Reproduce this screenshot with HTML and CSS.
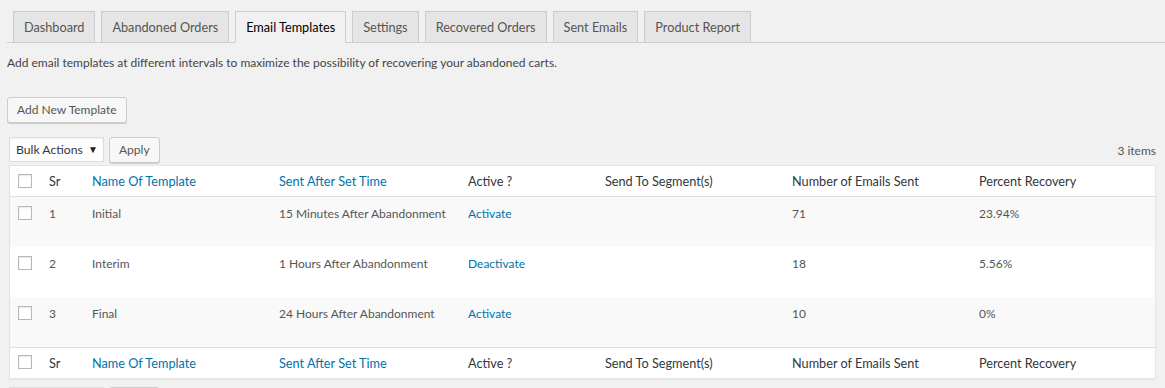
FILE: index.html
```html
<!DOCTYPE html>
<html lang="en">
<head>
    <meta charset="UTF-8">
    <meta name="viewport" content="width=device-width, initial-scale=1.0">
    <title>Email Templates</title>
    <link rel="stylesheet" href="styles.css">
</head>
<body>
    <h2 class="nav-tab-wrapper">
        <a class="nav-tab" href="#">Dashboard</a>
        <a class="nav-tab" href="#">Abandoned Orders</a>
        <a class="nav-tab nav-tab-active" href="#">Email Templates</a>
        <a class="nav-tab" href="#">Settings</a>
        <a class="nav-tab" href="#">Recovered Orders</a>
        <a class="nav-tab" href="#">Sent Emails</a>
        <a class="nav-tab" href="#">Product Report</a>
    </h2>

    <p class="intro">Add email templates at different intervals to maximize the possibility of recovering your abandoned carts.</p>

    <div class="add-row">
        <a class="button" href="#">Add New Template</a>
    </div>

    <div class="list">
        <div class="tablenav">
            <div class="bulk">
                <div class="select"><span>Bulk Actions</span><span class="arrow">▼</span></div>
                <a class="button" href="#">Apply</a>
            </div>
            <span class="count">3 items</span>
        </div>

        <table class="widefat">
            <colgroup>
                <col class="col-cb">
                <col class="col-sr">
                <col class="col-name">
                <col class="col-sent">
                <col class="col-active">
                <col class="col-segment">
                <col class="col-count">
                <col>
            </colgroup>
            <thead>
                <tr>
                    <th class="check-column"><input type="checkbox"></th>
                    <th>Sr</th>
                    <th><a href="#">Name Of Template</a></th>
                    <th><a href="#">Sent After Set Time</a></th>
                    <th>Active ?</th>
                    <th>Send To Segment(s)</th>
                    <th>Number of Emails Sent</th>
                    <th>Percent Recovery</th>
                </tr>
            </thead>
            <tbody>
                <tr>
                    <td class="check-column"><input type="checkbox"></td>
                    <td>1</td>
                    <td>Initial</td>
                    <td>15 Minutes After Abandonment</td>
                    <td><a href="#">Activate</a></td>
                    <td></td>
                    <td>71</td>
                    <td>23.94%</td>
                </tr>
                <tr>
                    <td class="check-column"><input type="checkbox"></td>
                    <td>2</td>
                    <td>Interim</td>
                    <td>1 Hours After Abandonment</td>
                    <td><a href="#">Deactivate</a></td>
                    <td></td>
                    <td>18</td>
                    <td>5.56%</td>
                </tr>
                <tr>
                    <td class="check-column"><input type="checkbox"></td>
                    <td>3</td>
                    <td>Final</td>
                    <td>24 Hours After Abandonment</td>
                    <td><a href="#">Activate</a></td>
                    <td></td>
                    <td>10</td>
                    <td>0%</td>
                </tr>
            </tbody>
            <tfoot>
                <tr>
                    <th class="check-column"><input type="checkbox"></th>
                    <th>Sr</th>
                    <th><a href="#">Name Of Template</a></th>
                    <th><a href="#">Sent After Set Time</a></th>
                    <th>Active ?</th>
                    <th>Send To Segment(s)</th>
                    <th>Number of Emails Sent</th>
                    <th>Percent Recovery</th>
                </tr>
            </tfoot>
        </table>

        <div class="tablenav bottom">
            <div class="bulk">
                <div class="select"><span>Bulk Actions</span><span class="arrow">▼</span></div>
                <a class="button" href="#">Apply</a>
            </div>
        </div>
    </div>
</body>
</html>
```

FILE: styles.css
```css
body {
    margin: 0;
    padding: 0 0 0 7px;
    background-color: #f1f1f1;
    color: #444;
    font-family: Lato, "Liberation Sans", sans-serif;
    font-size: 12px;
    line-height: 19px;
}
a {
    color: #0073aa;
    text-decoration: none;
}

/* tabs */
.nav-tab-wrapper {
    display: flex;
    margin: 0;
    padding: 11px 0 0;
    border-bottom: 1px solid #ccc;
    font-size: 12.7px;
    font-weight: normal;
}
.nav-tab {
    margin: 0 0 -1px 6px;
    padding: 0 10px;
    line-height: 30px;
    border: 1px solid #ccc;
    background-color: #e5e5e5;
    color: #555;
    white-space: nowrap;
}
.nav-tab-active {
    background-color: #f1f1f1;
    border-bottom-color: #f1f1f1;
    color: #000;
}

.intro {
    margin: 10px 0 0;
}
.add-row {
    margin-top: 25px;
}

.button {
    display: inline-block;
    box-sizing: border-box;
    height: 26px;
    padding: 0 9px;
    line-height: 24px;
    border: 1px solid #ccc;
    border-radius: 3px;
    background-color: #f7f7f7;
    box-shadow: 0 1px 0 #ccc;
    color: #555;
    white-space: nowrap;
}

/* list table */
.list {
    margin: 0 9px 0 2px;
}
.tablenav {
    display: flex;
    justify-content: space-between;
    height: 28px;
    margin-top: 14px;
}
.tablenav.bottom {
    margin-top: 8px;
}
.bulk {
    display: flex;
    align-items: flex-start;
    gap: 5px;
}
.select {
    display: flex;
    justify-content: space-between;
    align-items: center;
    box-sizing: border-box;
    width: 95px;
    height: 25px;
    padding: 0 5px 0 6px;
    border: 1px solid #ddd;
    background-color: #fff;
    box-shadow: inset 0 1px 2px rgba(0,0,0,0.07);
    color: #32373c;
    font-size: 12.2px;
    white-space: nowrap;
}
.select .arrow {
    font-size: 10px;
    color: #222;
}
.count {
    line-height: 28px;
    color: #555;
}

.widefat {
    width: 100%;
    table-layout: fixed;
    border-spacing: 0;
    border: 1px solid #e5e5e5;
    background-color: #fff;
    box-shadow: 0 1px 1px rgba(0,0,0,0.04);
}
.col-cb { width: 29px; }
.col-sr { width: 43px; }
.col-name { width: 187px; }
.col-sent { width: 189px; }
.col-active { width: 137px; }
.col-segment { width: 187px; }
.col-count { width: 187px; }

.widefat th {
    padding: 6px 10px;
    line-height: 18px;
    text-align: left;
    font-size: 12.7px;
    font-weight: normal;
    color: #32373c;
    border-bottom: 1px solid #e1e1e1;
    white-space: nowrap;
}
.widefat tfoot th {
    border-top: 1px solid #e1e1e1;
    border-bottom: none;
}
.widefat td {
    padding: 7px 10px 24px;
    line-height: 19px;
    vertical-align: top;
    color: #555;
    white-space: nowrap;
}
.widefat tbody tr:nth-child(odd) {
    background-color: #f9f9f9;
}
.widefat .check-column {
    padding: 8px 0 0 8px;
    vertical-align: top;
}
.widefat td.check-column {
    padding: 9px 0 0 8px;
}
.widefat tfoot th.check-column {
    padding-top: 7px;
}
input[type="checkbox"] {
    appearance: none;
    display: block;
    box-sizing: border-box;
    width: 14px;
    height: 14px;
    margin: 0;
    border: 1px solid #b4b9be;
    background-color: #fff;
    box-shadow: inset 0 1px 2px rgba(0,0,0,0.1);
}
```
